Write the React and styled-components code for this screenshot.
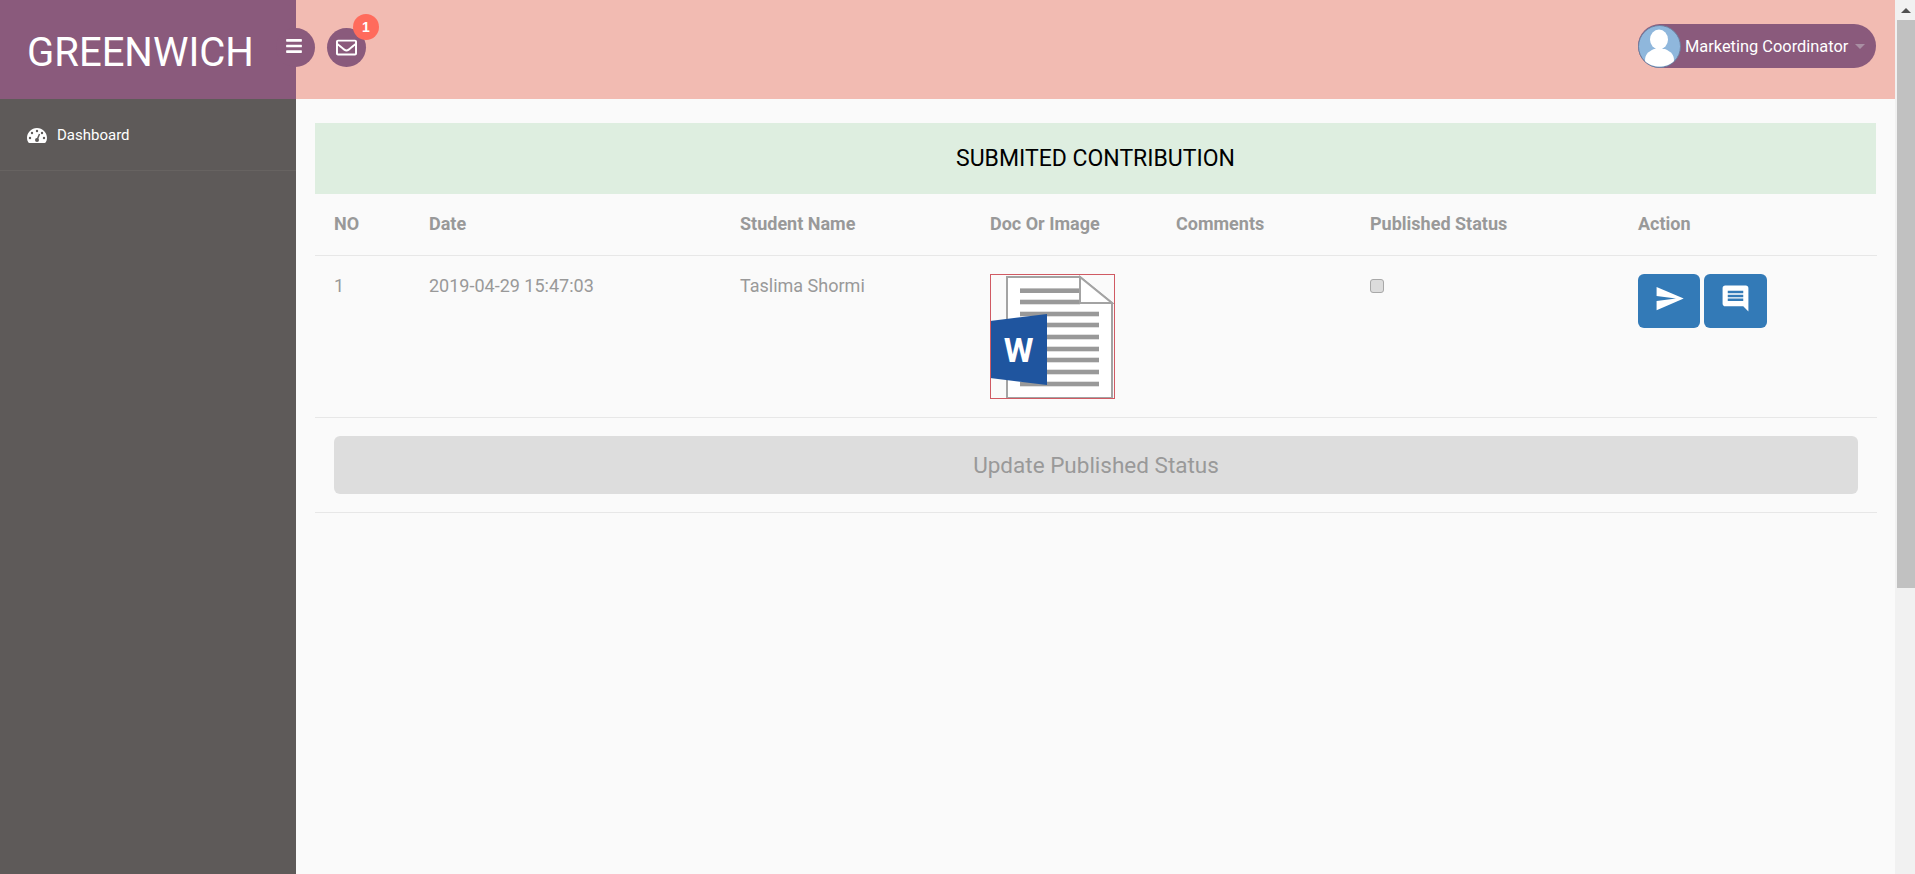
import styled, { createGlobalStyle } from 'styled-components';
import { FaBars, FaRegEnvelope } from 'react-icons/fa';
import { MdComment, MdSend } from 'react-icons/md';

const GlobalStyle = createGlobalStyle`
  html, body {
    margin: 0;
    padding: 0;
    height: 100%;
    overflow: hidden;
  }
  body {
    font-family: Roboto, "Liberation Sans", sans-serif;
    background-color: #fafafa;
  }
`;

const Shell = styled.div`
  display: flex;
  height: 100vh;
`;

const Page = styled.div`
  flex: 1;
  min-width: 0;
  display: flex;
  flex-direction: column;
`;

const Scrollbar = styled.div`
  width: 20px;
  flex-shrink: 0;
  background-color: #f1f1f1;
  display: flex;
  flex-direction: column;
  align-items: flex-end;
`;

const ScrollArrow = styled.div`
  width: 18px;
  height: 20px;
  display: flex;
  align-items: center;
  justify-content: center;

  &::before {
    content: '';
    border-left: 5px solid transparent;
    border-right: 5px solid transparent;
    border-bottom: 5px solid #505050;
  }
`;

const ScrollThumb = styled.div`
  width: 18px;
  height: 568px;
  background-color: #c1c1c1;
`;

const Header = styled.header`
  height: 99px;
  flex-shrink: 0;
  display: flex;
  align-items: center;
  background-color: #f2bbb2;
  padding-right: 19px;
`;

const Logo = styled.div`
  width: 296px;
  height: 100%;
  flex-shrink: 0;
  box-sizing: border-box;
  padding: 5px 0 0 27px;
  display: flex;
  align-items: center;
  background-color: #8a5a7c;
  color: #fff;
  font-size: 40px;
  position: relative;
  z-index: 0;
`;

const RoundButton = styled.button`
  width: 39px;
  height: 39px;
  border: none;
  border-radius: 50%;
  padding: 0 ${props => props.$nudge}px ${props => props.$lift}px 0;
  display: flex;
  align-items: center;
  justify-content: center;
  flex-shrink: 0;
  background-color: #8a5a7c;
  color: #fff;
  position: relative;
  margin-left: ${props => props.$offset}px;
  margin-top: -4px;
`;

const Badge = styled.span`
  position: absolute;
  top: -14px;
  right: -13px;
  width: 26px;
  height: 26px;
  border-radius: 50%;
  display: flex;
  align-items: center;
  justify-content: center;
  background-color: #ff6b5c;
  color: #fff;
  font-size: 14px;
  font-weight: 700;
`;

const UserMenu = styled.div`
  margin-left: auto;
  margin-top: -7px;
  width: 238px;
  height: 44px;
  box-sizing: border-box;
  border-radius: 22px;
  display: flex;
  align-items: center;
  background-color: #8a5a7c;
  color: #fff;
  font-size: 16.4px;
`;

const Avatar = styled.svg`
  width: 43px;
  height: 43px;
  margin-right: 4px;
  flex-shrink: 0;
`;

const Caret = styled.span`
  margin-left: 7px;
  border-left: 5px solid transparent;
  border-right: 5px solid transparent;
  border-top: 5px solid #a98fa3;
`;

const Body = styled.div`
  flex: 1;
  display: flex;
  min-height: 0;
`;

const Sidebar = styled.nav`
  width: 296px;
  flex-shrink: 0;
  background-color: #5e5a59;
`;

const NavItem = styled.a`
  height: 72px;
  box-sizing: border-box;
  padding: 1px 0 0 27px;
  display: flex;
  align-items: center;
  gap: 10px;
  color: #fff;
  font-size: 15px;
  border-bottom: 1px solid #676361;
`;

const GaugeIcon = styled.svg`
  width: 20px;
  height: 15px;
`;

const Main = styled.main`
  flex: 1;
  min-width: 0;
  padding: 24px 19px 0;
  background-color: #fafafa;
`;

const Banner = styled.div`
  height: 71px;
  display: flex;
  align-items: center;
  justify-content: center;
  background-color: #deeee0;
  color: #000;
  font-size: 23px;
`;

const Table = styled.table`
  width: 100%;
  table-layout: fixed;
  border-collapse: collapse;
  color: #999;
  font-size: 18px;
`;

const HeadCell = styled.th`
  padding: 18px 19px 19px;
  height: 24px;
  line-height: 24px;
  text-align: left;
  font-weight: 700;
  border-bottom: 1px solid #e7e7e7;
`;

const Cell = styled.td`
  padding: 18px 19px;
  vertical-align: top;
  line-height: 24px;
  border-bottom: 1px solid #e7e7e7;
`;

const DocImage = styled.svg`
  display: block;
  width: 125px;
  height: 125px;
`;

const PublishCheck = styled.input`
  appearance: none;
  display: block;
  box-sizing: border-box;
  width: 14px;
  height: 14px;
  margin: 5px 0 0;
  background-color: #dcdcdc;
  border: 1px solid #a8a8a8;
  border-radius: 3px;
`;

const ActionGroup = styled.div`
  display: flex;
  gap: 4px;
`;

const ActionButton = styled.button`
  width: ${props => props.$width}px;
  height: 54px;
  border: none;
  border-radius: 6px;
  padding: 0 0 6px;
  display: flex;
  align-items: center;
  justify-content: center;
  background-color: #337ab7;
  color: #fff;
`;

const UpdateButton = styled.button`
  display: block;
  width: 100%;
  height: 58px;
  border: none;
  border-radius: 6px;
  background-color: #ddd;
  color: #999;
  font-family: inherit;
  font-size: 22.5px;
`;

const columns = [95, 311, 250, 186, 194, 268, 258];
const headings = ['NO', 'Date', 'Student Name', 'Doc Or Image', 'Comments', 'Published Status', 'Action'];
const docLines = [
  [16.7, 90], [28, 90], [40, 109], [51, 109], [63, 109], [75, 109], [86, 109], [98, 109], [110, 109],
];
const gaugeTicks = [[10, 3], [5, 5], [15, 5], [3, 10], [17, 10]];

const WordIcon = () => (
  <DocImage viewBox="0 0 125 125">
    <path d="M17 3H90L122 29V124H17Z" fill="#fff" stroke="#a3a3a3" strokeWidth="2" />
    {docLines.map(([y, end]) => (
      <rect key={y} x="30" y={y - 2.3} width={end - 30} height="4.6" fill="#999" />
    ))}
    <path d="M90 3V29H122Z" fill="#fff" stroke="#a3a3a3" strokeWidth="2" />
    <path d="M0 47L57 40V111L0 104Z" fill="#1f559f" />
    <text x="28.5" y="88" textAnchor="middle" fill="#fff" fontFamily="Roboto, sans-serif" fontWeight="700" fontSize="34">W</text>
    <rect x="0.5" y="0.5" width="124" height="124" fill="none" stroke="#d05a63" />
  </DocImage>
);

const Gauge = () => (
  <GaugeIcon viewBox="0 0 20 15">
    <path d="M10 0C4.500 0 0 4.500 0 10c0 1.500.4 3 1.200 4.300.3.500.8.700 1.300.700h15c.5 0 1-.2 1.300-.7C19.600 13 20 11.500 20 10 20 4.500 15.500 0 10 0z" fill="#fff" />
    {gaugeTicks.map(([cx, cy]) => (
      <circle key={cx} cx={cx} cy={cy} r="1.200" fill="#5e5a59" />
    ))}
    <circle cx="10" cy="12" r="2" fill="#5e5a59" />
    <path d="M10 12L12.500 6" stroke="#5e5a59" strokeWidth="1.500" />
  </GaugeIcon>
);

const App = () => (
  <>
    <GlobalStyle />
    <Shell>
      <Page>
        <Header>
          <Logo>GREENWICH</Logo>
          <RoundButton $offset={-20} $lift={4} $nudge={3}>
            <FaBars size={18} />
          </RoundButton>
          <RoundButton $offset={12} $lift={0} $nudge={0}>
            <FaRegEnvelope size={21} />
            <Badge>1</Badge>
          </RoundButton>
          <UserMenu>
            <Avatar viewBox="0 0 43 43">
              <circle cx="21.500" cy="21.500" r="21" fill="#8fb7dc" stroke="#6d7f9f" />
              <ellipse cx="21" cy="14.500" rx="9" ry="10" fill="#fff" />
              <path d="M7 36c0-7 3-9 9-12h11c6 3 9 5 9 12-4 4-9 5.500-14.500 5.500S11 40 7 36z" fill="#fff" />
            </Avatar>
            Marketing Coordinator
            <Caret />
          </UserMenu>
        </Header>
        <Body>
          <Sidebar>
            <NavItem>
              <Gauge />
              Dashboard
            </NavItem>
          </Sidebar>
          <Main>
            <Banner>SUBMITED CONTRIBUTION</Banner>
            <Table>
              <colgroup>
                {columns.map((width, i) => <col key={i} width={width} />)}
              </colgroup>
              <thead>
                <tr>
                  {headings.map(heading => <HeadCell key={heading}>{heading}</HeadCell>)}
                </tr>
              </thead>
              <tbody>
                <tr>
                  <Cell>1</Cell>
                  <Cell>2019-04-29 15:47:03</Cell>
                  <Cell>Taslima Shormi</Cell>
                  <Cell><WordIcon /></Cell>
                  <Cell />
                  <Cell><PublishCheck type="checkbox" disabled /></Cell>
                  <Cell>
                    <ActionGroup>
                      <ActionButton $width={62}><MdSend size={31} /></ActionButton>
                      <ActionButton $width={63}><MdComment size={31} /></ActionButton>
                    </ActionGroup>
                  </Cell>
                </tr>
                <tr>
                  <Cell colSpan={7}>
                    <UpdateButton>Update Published Status</UpdateButton>
                  </Cell>
                </tr>
              </tbody>
            </Table>
          </Main>
        </Body>
      </Page>
      <Scrollbar>
        <ScrollArrow />
        <ScrollThumb />
      </Scrollbar>
    </Shell>
  </>
);

export default App;
